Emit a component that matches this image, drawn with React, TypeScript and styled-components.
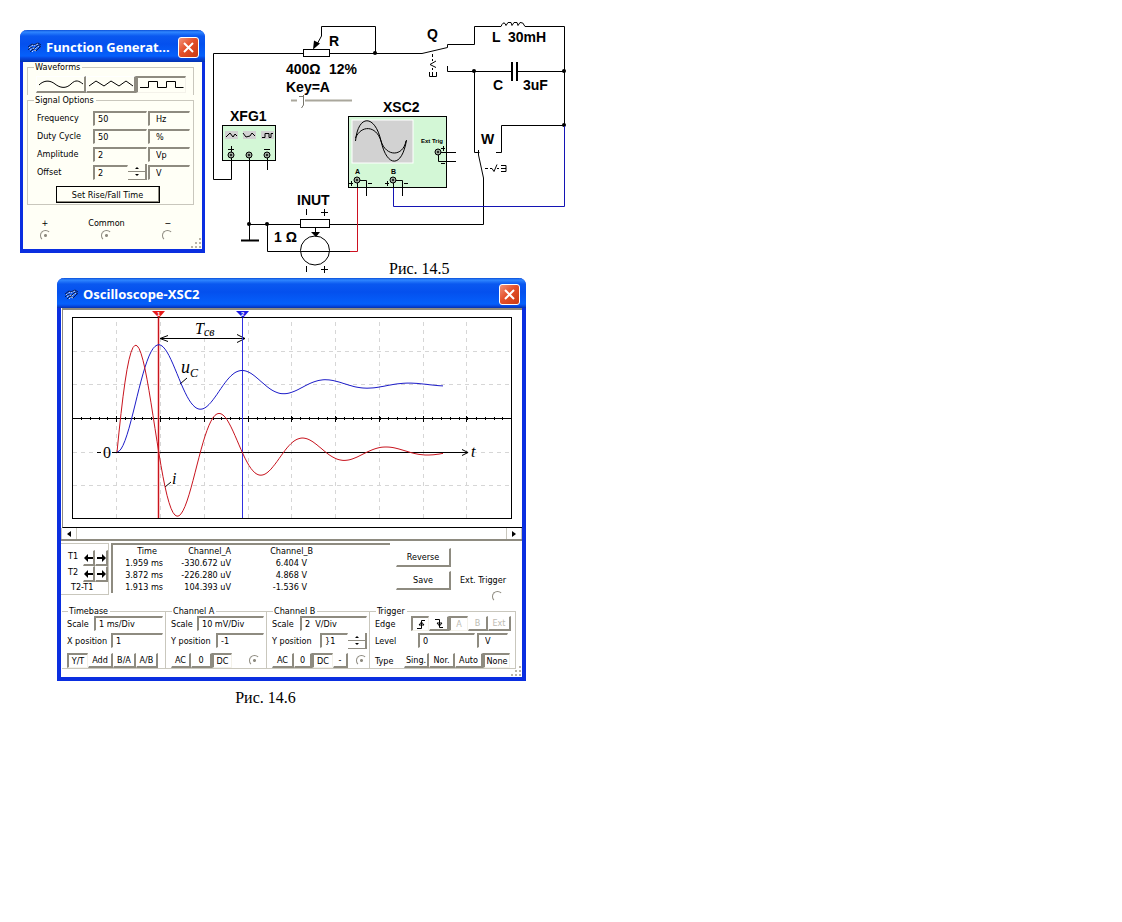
import React from "react";
import styled, { createGlobalStyle, css } from "styled-components";

const GRAY = "#8e8b80";
const LINE = "#c9c7bd";
const RED = "#c8141e";
const BLUE = "#1c1cc8";

const GlobalStyle = createGlobalStyle`
  *, *::before, *::after { box-sizing: border-box; }
  body { margin: 0; background: #fff; color: #000; }
`;

const Page = styled.main`
  padding: 20px;
`;

const FigureRow = styled.figure`
  margin: 0;
  display: flex;
  align-items: flex-start;
`;

const SchematicArea = styled.div`
  display: grid;
  flex: none;

  > * { grid-area: 1 / 1; }
`;

const Caption = styled.figcaption`
  font: 16px/18px "Liberation Serif", serif;
`;

const SchematicCaption = styled(Caption)`
  align-self: end;
  padding-left: 184px;
`;

const ScopeFigure = styled.figure`
  margin: 0 0 0 37px;
  width: 469px;
  max-width: 100%;
`;

const ScopeCaption = styled(Caption)`
  margin-top: 8px;
  padding-right: 52px;
  text-align: center;
`;

const Window = styled.section<{ $tint?: string }>`
  position: relative;
  background: ${(p) => p.$tint || "#fff"};
  border: solid #0a2ee0;
  border-width: 0 4px 4px;
  border-radius: 7px 7px 0 0;
  font: 9px/12px "DejaVu Sans Condensed", "DejaVu Sans", sans-serif;
`;

const GeneratorWindow = styled(Window)`
  flex: none;
  width: 185px;
  margin-top: 10px;
  border-width: 0 3px 4px;
`;

const TitleBar = styled.header`
  display: flex;
  align-items: center;
  gap: 4px;
  height: 32px;
  margin: 0 -3px;
  padding: 2px 6px 0 7px;
  border-radius: 7px 7px 0 0;
  background: linear-gradient(#0a4fd8 0, #2f86ff 2px, #0a58f0 6px, #0450ee 14px, #0560fb 26px, #0648e0 28px, #0432b0 100%);
  color: #fff;
`;

const Title = styled.h2`
  flex: 1;
  margin: 0;
  font: bold 13px/18px "Noto Sans", sans-serif;
  white-space: nowrap;
`;

const CloseButton = styled.button`
  width: 21px;
  height: 21px;
  padding: 0;
  display: grid;
  place-items: center;
  border: 1px solid #fff;
  border-radius: 3px;
  background: linear-gradient(135deg, #f2937a, #e4502a 45%, #c93a12);
`;

const Group = styled.fieldset<{ $open?: boolean }>`
  min-width: 0;
  margin: 0;
  padding: 0;
  border: 1px solid ${LINE};
  border-bottom-width: ${(p) => (p.$open ? 0 : 1)}px;
`;

const Legend = styled.legend`
  margin-left: 6px;
  padding: 0 2px 0 1px;
  line-height: 10px;
`;

const raised = css`
  border-color: #fff ${GRAY} ${GRAY} #fff;
  border-width: 1px 2px 2px 1px;
`;
const sunken = css`
  border-color: ${GRAY} #f4f2ea #f4f2ea ${GRAY};
  border-width: 2px 1px 1px 2px;
`;

const PushButton = styled.button<{ $down?: boolean; $w?: number; $h?: number }>`
  display: flex;
  flex: none;
  align-items: center;
  justify-content: center;
  width: ${(p) => (p.$w ? `${p.$w}px` : "auto")};
  height: ${(p) => p.$h || 15}px;
  padding: 0;
  background: transparent;
  border-style: solid;
  ${(p) => (p.$down ? sunken : raised)}
  color: #000;
  font: inherit;
  white-space: nowrap;

  &:disabled { color: #bdbbb2; }
`;

const DefaultButton = styled(PushButton)`
  border: 1px solid #000;
  box-shadow: inset -1px -1px 0 ${GRAY};
`;

const Field = styled.input`
  flex: 1;
  min-width: 0;
  width: 100%;
  height: 15px;
  padding: 0 0 0 3px;
  border-style: solid;
  ${sunken}
  border-right-color: transparent;
  border-bottom-color: transparent;
  border-radius: 0;
  background: transparent;
  color: #000;
  font: inherit;
`;

const UnitSelect = styled.select`
  appearance: none;
  min-width: 0;
  width: 100%;
  height: 15px;
  padding: 0 0 0 6px;
  border-style: solid;
  ${sunken}
  border-right-color: transparent;
  border-bottom-color: transparent;
  border-radius: 0;
  background: transparent;
  color: #000;
  font: inherit;
`;

const SpinBox = styled.span`
  display: grid;
  flex: none;
  width: 19px;
`;

const SpinButton = styled.button`
  display: grid;
  place-items: center;
  height: 8px;
  padding: 0;
  background: transparent;
  border: solid ${GRAY};
  border-width: 0 2px 1px 0;
`;

const Radio = styled.input`
  appearance: none;
  flex: none;
  width: 11px;
  height: 11px;
  margin: 0;
  border: 1px solid;
  border-color: ${GRAY} transparent transparent ${GRAY};
  border-radius: 50%;

  &:checked { background: radial-gradient(circle, ${GRAY} 0 1px, transparent 2px); }
`;

const WaveRow = styled.div`
  display: grid;
  grid-template-columns: repeat(3, 1fr);
  padding: 4px 7px 2px 8px;
`;

const SignalRows = styled.div`
  padding: 4px 3px 1px 9px;
`;

const SignalRow = styled.div`
  display: grid;
  grid-template-columns: 55px 54px 42px;
  column-gap: 1px;
  align-items: center;
  height: 18px;
`;

const Inline = styled.div`
  display: flex;
  align-items: center;
`;

const GeneratorActions = styled.div`
  display: flex;
  justify-content: center;
  padding: 5px 12px 0 0;
`;

const GeneratorBody = styled.div`
  padding: 0 8px 0 4px;
`;

const Terminals = styled.div`
  display: flex;
  justify-content: space-between;
  padding: 12px 28px 8px 16px;
`;

const TerminalLabel = styled.label`
  display: grid;
  justify-items: center;
  gap: 1px;
  min-width: 12px;
`;

const Grip = styled.svg`
  position: absolute;
  right: 0;
  bottom: 0;
`;

const ScopeTitleBar = styled(TitleBar)`
  height: 30px;
  margin: 0 -4px;
`;

const PlotPanel = styled.div`
  margin-left: 1px;
  border: solid ${GRAY};
  border-width: 2px 0 0 1px;
  border-bottom: 1px solid #000;

  svg { display: block; width: 100%; height: auto; }
`;

const ScrollTrack = styled.div`
  display: flex;
  justify-content: space-between;
  height: 13px;
  border-bottom: 2px solid ${GRAY};
`;

const ScrollButton = styled.button`
  width: 16px;
  padding: 0;
  display: grid;
  place-items: center;
  background: #fff;
  border: solid ${LINE};
  border-width: 0 1px;
`;

const Readout = styled.div`
  display: flex;
  align-items: flex-start;
  height: 65px;
  padding-top: 2px;
`;

const CursorBox = styled.div`
  width: 48px;
  height: 52px;
  padding: 6px 0 0 7px;
  border: solid ${LINE};
  border-width: 1px 1px 1px 0;
`;

const CursorGrid = styled.div`
  display: grid;
  grid-template-columns: 15px 12px 13px;
`;

const CursorDelta = styled.div`
  padding: 0 0 0 3px;
  line-height: 10px;
`;

const ReadoutPanel = styled.div`
  width: 279px;
  height: 50px;
  margin-left: 2px;
  border: solid ${GRAY};
  border-width: 2px 0 0 2px;
`;

const ReadoutTable = styled.table`
  border-collapse: collapse;
  table-layout: fixed;
  width: 200px;

  th, td { height: 12px; padding: 0; text-align: right; font-weight: normal; white-space: nowrap; line-height: 12px; }
  th:first-child { width: 50px; padding-right: 6px; }
  th:nth-child(2) { width: 68px; }
  td:last-child { padding-right: 6px; }
`;

const ActionColumn = styled.div`
  display: grid;
  gap: 4px;
  margin: 5px 0 0 6px;
`;

const ExtTrigger = styled.label`
  display: grid;
  gap: 5px;
  margin: 31px 0 0 9px;
  white-space: nowrap;

  input { justify-self: center; margin-left: 28px; }
`;

const Panels = styled.div`
  display: grid;
  grid-template-columns: 104px 101px 103px 146px;
  padding: 0 0 8px 1px;

  > fieldset { border-left-width: 0; }
`;

const PanelRow = styled.div<{ $top?: number }>`
  display: flex;
  align-items: center;
  height: 15px;
  margin-top: ${(p) => p.$top || 0}px;
  padding: 0 2px 0 5px;
  white-space: nowrap;
`;

const RowLabel = styled.label<{ $w: number }>`
  flex: none;
  width: ${(p) => p.$w}px;
`;

const Gap = styled.span<{ $w?: number }>`
  flex: ${(p) => (p.$w ? `0 0 ${p.$w}px` : "1")};
`;

function Logo() {
  return (
    <svg width="15" height="13" viewBox="0 0 15 13" fill="none" aria-hidden="true">
      <path d="M1 6l4-3 2 1 4-2 3 2M1 9l3-3 3 2 4-4 3 2M3 11l3-3 3 2 4-4" stroke="#0b1c52" strokeWidth="1" />
      <path d="M2 7l4-3 1 1 4-2M3 9l3-2 2 1 4-3M5 11l2-2 2 1" stroke="#d4dcf0" strokeDasharray="2 1" />
    </svg>
  );
}

function Close() {
  return (
    <CloseButton type="button" aria-label="Close">
      <svg width="13" height="13" viewBox="0 0 13 13" aria-hidden="true">
        <path d="M2 2l9 9M11 2l-9 9" stroke="#fff" strokeWidth="2" />
      </svg>
    </CloseButton>
  );
}

function Spinner({ name }: { name: string }) {
  return (
    <SpinBox>
      <SpinButton type="button" aria-label={`${name} up`}>
        <svg width="4" height="3" aria-hidden="true"><path d="M0 3l2-2 2 2z" /></svg>
      </SpinButton>
      <SpinButton type="button" aria-label={`${name} down`}>
        <svg width="4" height="3" aria-hidden="true"><path d="M0 0h4l-2 2z" /></svg>
      </SpinButton>
    </SpinBox>
  );
}

function ResizeGrip() {
  return (
    <Grip width="11" height="11" aria-hidden="true" fill="#b9b4a6">
      <path d="M8 0h2v2h-2zM4 4h2v2h-2zM8 4h2v2h-2zM0 8h2v2h-2zM4 8h2v2h-2zM8 8h2v2h-2z" />
    </Grip>
  );
}

const waves = [
  { name: "Sine wave", d: "M1 7C6 2 12 2 17 6S28 11 33 6S41 3 45 6" },
  { name: "Triangle wave", d: "M1 8l7-5 8 5 7-5 8 5 7-5 7 5" },
  { name: "Square wave", d: "M1 8.500h8.500v-6h9v6h9v-6h9v6h8" },
];

const signals = [
  { name: "Frequency", value: "50", unit: "Hz" },
  { name: "Duty Cycle", value: "50", unit: "%" },
  { name: "Amplitude", value: "2", unit: "Vp" },
  { name: "Offset", value: "2", unit: "V", spin: true },
];

function FunctionGenerator() {
  return (
    <GeneratorWindow $tint="#fffff6">
      <TitleBar>
        <Logo />
        <Title>Function Generat...</Title>
        <Close />
      </TitleBar>
      <GeneratorBody>
        <Group $open>
          <Legend>Waveforms</Legend>
          <WaveRow>
            {waves.map((w, i) => (
              <PushButton key={w.name} type="button" aria-label={w.name} $down={i === 2} $h={17}>
                <svg width="46" height="12" fill="none" stroke="#000" aria-hidden="true"><path d={w.d} /></svg>
              </PushButton>
            ))}
          </WaveRow>
        </Group>
        <Group>
          <Legend>Signal Options</Legend>
          <SignalRows>
            {signals.map((s) => (
              <SignalRow key={s.name}>
                <label htmlFor={s.name}>{s.name}</label>
                <Inline>
                  <Field id={s.name} defaultValue={s.value} />
                  {s.spin && <Spinner name={s.name} />}
                </Inline>
                <UnitSelect aria-label={`${s.name} unit`}><option>{s.unit}</option></UnitSelect>
              </SignalRow>
            ))}
            <GeneratorActions>
              <DefaultButton type="button" $w={104} $h={17}>Set Rise/Fall Time</DefaultButton>
            </GeneratorActions>
          </SignalRows>
        </Group>
      </GeneratorBody>
      <Terminals>
        <TerminalLabel>+<Radio type="radio" name="plus" defaultChecked /></TerminalLabel>
        <TerminalLabel>Common<Radio type="radio" name="common" defaultChecked /></TerminalLabel>
        <TerminalLabel>−<Radio type="radio" name="minus" /></TerminalLabel>
      </Terminals>
      <ResizeGrip />
    </GeneratorWindow>
  );
}

function Jack({ x, y }: { x: number; y: number }) {
  return (
    <g>
      <circle cx={x} cy={y} r="3" fill="#9aa79a" stroke="#000" />
      <circle cx={x} cy={y} r="1" />
    </g>
  );
}

const SchematicSvg = styled.svg`
  display: block;
  font: bold 14px "Liberation Sans", Arial, sans-serif;
`;

const PartMark = styled.text<{ $size: number }>`
  font-size: ${(p) => p.$size}px;
`;

function Schematic() {
  return (
    <SchematicSvg width="365" height="258" viewBox="205 20 365 258" role="img" aria-label="Circuit schematic">
      <g fill="#d3f7d6" stroke="#000">
        <rect x="222.500" y="125.500" width="53" height="35" />
        <rect x="348.500" y="116.500" width="98" height="71" />
      </g>
      <rect x="352" y="120" width="61" height="43" fill="#d2d2d2" stroke="#fff" />
      <g fill="#d2d2d2">
        <rect x="225" y="131" width="13" height="8" />
        <rect x="243" y="131" width="13" height="8" />
        <rect x="261" y="131" width="13" height="8" />
      </g>
      <g fill="none" stroke="#000">
        <path d="M303 53.500H213.500V179.500H231.500V155M330 53.500H422M375.500 53V26.500H321.500V36L316 46" />
        <rect x="303.500" y="49.500" width="26" height="7" fill="#fff" />
        <path d="M422 53.500L447.500 47.500V44.500H474.500V26.500H501M525 26.500H564.500V125M447.500 66V71.500H511M518 71.500H564" />
        <path d="M501 26.500q2-5 4-3l1 2 2-3 3 0 1 3 2-3 3 0 1 3 2-3q3-1 5 4" />
        <path d="M512 62v19M517 62v19" strokeWidth="2" />
        <path d="M474.500 71V152.500H479.500M478.500 150V155L483.500 178V224.500H330M496 152.500H501.500V125.500H564" />
        <path d="M249.500 155V240M267.500 155V170M249 224.500H300M267.500 224V251.500H350M315.500 228v7" />
        <path d="M241 240.500h18" strokeWidth="2" />
        <rect x="300.500" y="219.500" width="29" height="8" />
        <circle cx="315" cy="250.500" r="14.500" />
        <path d="M432.500 54v3M432.500 59v2M436 61l-6 3.500 6 3M432.500 68v2M429.500 72v4.500h7V72M432.500 72v4" />
        <path d="M485 168.500h3M490 168.500h2l2 3 3-7M497 168.500h2M501 165.500h5v6h-5M501 168.500h5" />
        <path d="M306.500 209v6M306.500 266v6M321 212.500h7M324.500 209v7M321 269.500h7M324.500 266v7" />
        <path d="M228 149.500h6M231.500 146v6M264 149.500h6" />
        <path d="M226 137l4-4 3 4 2-3 2 2M243 133l3 4 4-1 2-3 3 3M262 137.500h3v-4h4v4h2v-4h2" />
        <path d="M357.500 180.500H366.500V196M393.500 180.500H402.500V196M438 152.500H456M438.500 152V161.500H456M357.500 180V187M393.500 180V188" />
        <path d="M355.500 141C358 114 375 114 381 141S402 168 406.500 140M355.500 138C361 125 376 125 381 141S403 157 406 141" />
        <path d="M349 183.500h4M351.500 181v5M385 183.500h4M387.500 181v5M441 148.500h4M443.500 146v5M368 183.500h4M404 183.500h4M441 163.500h4" />
      </g>
      <path d="M313 49.500l1-9 6 3zM311 232h9l-4 5z" />
      <g>
        {[[375, 53], [474, 71], [564, 71], [564, 125], [249, 224], [267, 224]].map(([x, y]) => (
          <circle key={`${x}-${y}`} cx={x} cy={y} r="2" />
        ))}
      </g>
      <path d="M393.500 188V206.500H564.500V126" fill="none" stroke="#1414b4" />
      <path d="M350 251.500H357.500V188" fill="none" stroke="#cc1020" />
      <path d="M291 100.500h6M305 100.500h47" stroke="#aaa79c" strokeWidth="2" />
      <path d="M303.500 95v10l-2 3M299 96.500h4" stroke="#77756c" fill="none" />
      <Jack x={231} y={155} /><Jack x={249} y={155} /><Jack x={267} y={155} />
      <Jack x={357} y={180} /><Jack x={393} y={180} /><Jack x={438} y={152} />
      <text x="329" y="46">R</text>
      <text x="286" y="74">400Ω</text>
      <text x="329" y="74">12%</text>
      <text x="286" y="92">Key=A</text>
      <text x="230" y="121">XFG1</text>
      <text x="383" y="112">XSC2</text>
      <text x="297" y="205">INUT</text>
      <text x="274" y="242">1 Ω</text>
      <text x="427" y="39">Q</text>
      <text x="492" y="42">L</text>
      <text x="508" y="42">30mH</text>
      <text x="493" y="90">C</text>
      <text x="523" y="90">3uF</text>
      <text x="481" y="144">W</text>
      <PartMark $size={6} x="421" y="143">Ext Trig</PartMark>
      <PartMark $size={7} x="355" y="174">A</PartMark>
      <PartMark $size={7} x="391" y="174">B</PartMark>
    </SchematicSvg>
  );
}

/* Step response of the series RLC circuit, in plot pixels. */
const DECAY = 0.0122;
const OMEGA = Math.PI / 41.7;
const START = 117;

function trace(f: (t: number) => number) {
  const points: string[] = [];
  for (let t = 0; t <= 326; t += 2) points.push(`${START + t} ${f(t).toFixed(1)}`);
  return `M${points.join("L")}`;
}

const voltagePath = trace(
  (t) => 385 + 67 * Math.exp(-DECAY * t) * (Math.cos(OMEGA * t) + (DECAY / OMEGA) * Math.sin(OMEGA * t)),
);
const currentPath = trace((t) => 452 - 136 * Math.exp(-DECAY * t) * Math.sin(OMEGA * t));

const gridX = Array.from({ length: 9 }, (_, i) => 116.5 + i * 44 - Math.floor(i / 4));
const ticks = Array.from({ length: 49 }, (_, i) => 81 + Math.round(i * 8.78));

const MathText = styled.text<{ $size: number; $upright?: boolean }>`
  font: ${(p) => (p.$upright ? "normal" : "italic")} ${(p) => p.$size}px "Liberation Serif", serif;
`;

const MarkerText = styled.text`
  font: bold 6px "Liberation Sans", sans-serif;
  fill: #fff;
`;

function Plot() {
  return (
    <svg viewBox="63 310 459 217" role="img" aria-label="Capacitor voltage and current traces">
      <g stroke="#d6d6d6" strokeDasharray="4 4">
        {gridX.map((x) => <path key={x} d={`M${x} 322V518`} />)}
        {[351.5, 384.5, 452.5, 485.5].map((y) => <path key={y} d={`M73 ${y}H511`} />)}
      </g>
      <g stroke="#000" fill="none">
        <rect x="72.500" y="317.500" width="439" height="201" />
        <path d="M73 418.500H511" />
        {ticks.map((x) => <path key={x} d={`M${x}.5 417v3`} />)}
        {gridX.map((x) => <path key={x} d={`M${x} 416v6`} />)}
        <path d="M97 452.500h4M112 452.500H468M462 449.500l6 3-6 3" />
        <path d="M160 338.500H245M168 335.500l-8 3 8 3M237 334.500l8 4-8 4" />
        <path d="M180 384l7-6M165 487l6-5" />
      </g>
      <path d="M158.500 318V518" stroke="#f28c8c" strokeWidth="2" />
      <path d="M158.500 318V518" stroke={RED} />
      <path d="M242.500 318V518" stroke="#3030e0" strokeWidth="1" />
      <path d={voltagePath} fill="none" stroke={BLUE} />
      <path d={currentPath} fill="none" stroke={RED} />
      <path d="M152 311h13l-6 7z" fill="#e61919" />
      <path d="M236 311h13l-6 7z" fill="#1919e6" />
      <MarkerText x="157" y="316">1</MarkerText>
      <MarkerText x="241" y="316">2</MarkerText>
      <MathText $size={16} x="195" y="334">T</MathText>
      <MathText $size={12} x="204" y="336">св</MathText>
      <MathText $size={18} x="181" y="373">u</MathText>
      <MathText $size={12} x="190" y="377">C</MathText>
      <MathText $size={16} x="172" y="484">i</MathText>
      <MathText $size={16} x="471" y="457">t</MathText>
      <MathText $size={16} $upright x="103" y="458">0</MathText>
    </svg>
  );
}

function ArrowButton({ label, left }: { label: string; left?: boolean }) {
  return (
    <PushButton type="button" aria-label={label} $h={16}>
      <svg width="9" height="8" aria-hidden="true">
        <path d={left ? "M0 4l4-4v3h5v2H4v3z" : "M9 4L5 0v3H0v2h5v3z"} />
      </svg>
    </PushButton>
  );
}

const readings = [
  ["1.959 ms", "-330.672 uV", "6.404 V"],
  ["3.872 ms", "-226.280 uV", "4.868 V"],
  ["1.913 ms", "104.393 uV", "-1.536 V"],
];

function Oscilloscope() {
  return (
    <Window>
      <ScopeTitleBar>
        <Logo />
        <Title>Oscilloscope-XSC2</Title>
        <Close />
      </ScopeTitleBar>
      <PlotPanel><Plot /></PlotPanel>
      <ScrollTrack>
        <ScrollButton type="button" aria-label="Scroll left">
          <svg width="4" height="6" aria-hidden="true"><path d="M4 0v6L0 3z" /></svg>
        </ScrollButton>
        <ScrollButton type="button" aria-label="Scroll right">
          <svg width="4" height="6" aria-hidden="true"><path d="M0 0v6l4-3z" /></svg>
        </ScrollButton>
      </ScrollTrack>
      <Readout>
        <CursorBox>
          <CursorGrid>
            <span>T1</span>
            <ArrowButton label="T1 left" left />
            <ArrowButton label="T1 right" />
            <span>T2</span>
            <ArrowButton label="T2 left" left />
            <ArrowButton label="T2 right" />
          </CursorGrid>
          <CursorDelta>T2-T1</CursorDelta>
        </CursorBox>
        <ReadoutPanel>
          <ReadoutTable>
            <thead>
              <tr><th scope="col">Time</th><th scope="col">Channel_A</th><th scope="col">Channel_B</th></tr>
            </thead>
            <tbody>
              {readings.map((row) => (
                <tr key={row[0]}>{row.map((cell) => <td key={cell}>{cell}</td>)}</tr>
              ))}
            </tbody>
          </ReadoutTable>
        </ReadoutPanel>
        <ActionColumn>
          <PushButton type="button" $w={55} $h={19}>Reverse</PushButton>
          <PushButton type="button" $w={55} $h={19}>Save</PushButton>
        </ActionColumn>
        <ExtTrigger>Ext. Trigger<Radio type="radio" name="ext" /></ExtTrigger>
      </Readout>
      <Panels>
        <Group>
          <Legend>Timebase</Legend>
          <PanelRow>
            <RowLabel $w={27} htmlFor="tb-scale">Scale</RowLabel>
            <Field id="tb-scale" defaultValue="1 ms/Div" />
          </PanelRow>
          <PanelRow $top={2}>
            <RowLabel $w={44} htmlFor="tb-pos">X position</RowLabel>
            <Field id="tb-pos" defaultValue="1" />
          </PanelRow>
          <PanelRow $top={5}>
            <PushButton type="button" $down $w={21}>Y/T</PushButton>
            <PushButton type="button" $w={25}>Add</PushButton>
            <PushButton type="button" $w={23}>B/A</PushButton>
            <PushButton type="button" $w={22}>A/B</PushButton>
          </PanelRow>
        </Group>
        <Group>
          <Legend>Channel A</Legend>
          <PanelRow>
            <RowLabel $w={26} htmlFor="a-scale">Scale</RowLabel>
            <Field id="a-scale" defaultValue="10 mV/Div" />
          </PanelRow>
          <PanelRow $top={2}>
            <RowLabel $w={45} htmlFor="a-pos">Y position</RowLabel>
            <Field id="a-pos" defaultValue="-1" />
          </PanelRow>
          <PanelRow $top={5}>
            <PushButton type="button" $w={20}>AC</PushButton>
            <PushButton type="button" $w={21}>0</PushButton>
            <PushButton type="button" $down $w={20}>DC</PushButton>
            <Gap />
            <Radio type="radio" name="a-in" aria-label="Channel A input" defaultChecked />
            <Gap $w={4} />
          </PanelRow>
        </Group>
        <Group>
          <Legend>Channel B</Legend>
          <PanelRow>
            <RowLabel $w={28} htmlFor="b-scale">Scale</RowLabel>
            <Field id="b-scale" defaultValue="2  V/Div" />
          </PanelRow>
          <PanelRow $top={2}>
            <RowLabel $w={48} htmlFor="b-pos">Y position</RowLabel>
            <Field id="b-pos" defaultValue="}1" />
            <Spinner name="Y position" />
          </PanelRow>
          <PanelRow $top={5}>
            <PushButton type="button" $w={22}>AC</PushButton>
            <PushButton type="button" $w={18}>0</PushButton>
            <PushButton type="button" $down $w={21}>DC</PushButton>
            <PushButton type="button" $w={15}>-</PushButton>
            <Gap />
            <Radio type="radio" name="b-in" aria-label="Channel B input" defaultChecked />
          </PanelRow>
        </Group>
        <Group>
          <Legend>Trigger</Legend>
          <PanelRow>
            <Gap $w={36}>Edge</Gap>
            <PushButton type="button" aria-label="Rising edge" $down $w={18}>
              <svg width="10" height="10" fill="none" stroke="#000" aria-hidden="true"><path d="M1 9.500h4.500v-8H9M3 6l2.500-3L8 6z" /></svg>
            </PushButton>
            <PushButton type="button" aria-label="Falling edge" $w={20}>
              <svg width="10" height="10" fill="none" stroke="#000" aria-hidden="true"><path d="M1 1.500h4.500v8H9M3 5l2.500 3L8 5z" /></svg>
            </PushButton>
            <PushButton type="button" disabled $down $w={19}>A</PushButton>
            <PushButton type="button" disabled $w={20}>B</PushButton>
            <PushButton type="button" disabled $w={23}>Ext</PushButton>
          </PanelRow>
          <PanelRow $top={2}>
            <RowLabel $w={43} htmlFor="level">Level</RowLabel>
            <Field id="level" defaultValue="0" />
            <Gap $w={2} />
            <Gap $w={31}>
              <UnitSelect aria-label="Level unit"><option>V</option></UnitSelect>
            </Gap>
            <Gap $w={5} />
          </PanelRow>
          <PanelRow $top={5}>
            <Gap $w={29}>Type</Gap>
            <PushButton type="button" $w={25}>Sing.</PushButton>
            <PushButton type="button" $w={26}>Nor.</PushButton>
            <PushButton type="button" $w={28}>Auto</PushButton>
            <PushButton type="button" $down $w={27}>None</PushButton>
          </PanelRow>
        </Group>
      </Panels>
      <ResizeGrip />
    </Window>
  );
}

export default function App() {
  return (
    <>
      <GlobalStyle />
      <Page>
        <FigureRow>
          <FunctionGenerator />
          <SchematicArea>
            <Schematic />
            <SchematicCaption>Рис. 14.5</SchematicCaption>
          </SchematicArea>
        </FigureRow>
        <ScopeFigure>
          <Oscilloscope />
          <ScopeCaption>Рис. 14.6</ScopeCaption>
        </ScopeFigure>
      </Page>
    </>
  );
}
